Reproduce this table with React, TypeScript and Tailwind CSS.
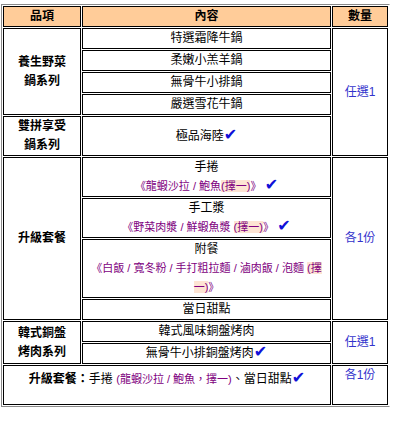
import React from "react";

const cell = "border border-black p-0 text-center align-middle";
const purple = "text-[11px] text-[#800080]";
const pick = "bg-[#fde4d3]";

function Check() {
  return (
    <span className="font-['DejaVu_Sans',sans-serif] text-[16px] leading-none font-bold text-[#1010d8]">
      ✔
    </span>
  );
}

export default function App() {
  return (
    <div className="min-h-screen bg-white pt-1 pl-px font-['Liberation_Sans','Noto_Sans_CJK_TC',sans-serif] text-[12px] leading-[19px] text-black">
      <table className="table-fixed w-[389px] border-separate border-spacing-[1px] border border-[#8a8a8a] border-r-white">
        <tbody>
          {/* Header */}
          <tr>
            <td className={`${cell} w-[78px] bg-[#ffcc99] font-bold`}>品項</td>
            <td className={`${cell} w-[249px] bg-[#ffcc99] font-bold`}>內容</td>
            <td className={`${cell} w-[56px] bg-[#ffcc99] font-bold`}>數量</td>
          </tr>

          {/* 養生野菜鍋系列 */}
          <tr>
            <td rowSpan={4} className={`${cell} font-bold`}>
              養生野菜
              <br />
              鍋系列
            </td>
            <td className={cell}>特選霜降牛鍋</td>
            <td rowSpan={5} className={`${cell} text-[#3333cc]`}>
              任選1
            </td>
          </tr>
          <tr>
            <td className={cell}>柔嫩小羔羊鍋</td>
          </tr>
          <tr>
            <td className={cell}>無骨牛小排鍋</td>
          </tr>
          <tr>
            <td className={cell}>嚴選雪花牛鍋</td>
          </tr>

          {/* 雙拼享受鍋系列 */}
          <tr>
            <td className={`${cell} font-bold`}>
              雙拼享受
              <br />
              鍋系列
            </td>
            <td className={cell}>
              極品海陸
              <Check />
            </td>
          </tr>

          {/* 升級套餐 */}
          <tr>
            <td rowSpan={4} className={`${cell} font-bold`}>
              升級套餐
            </td>
            <td className={cell}>
              手捲
              <br />
              <span className={purple}>
                《龍蝦沙拉 / 鮑魚<span className={pick}>(擇一)</span>》
              </span>{" "}
              <Check />
            </td>
            <td rowSpan={4} className={`${cell} text-[#3333cc]`}>
              各1份
            </td>
          </tr>
          <tr>
            <td className={cell}>
              手工漿
              <br />
              <span className={purple}>
                《野菜肉漿 / 鮮蝦魚漿 <span className={pick}>(擇一)</span>》
              </span>{" "}
              <Check />
            </td>
          </tr>
          <tr>
            <td className={cell}>
              附餐
              <br />
              <span className={purple}>
                《白飯 / 寬冬粉 / 手打粗拉麵 / 滷肉飯 / 泡麵{" "}
                <span className={pick}>(擇一)</span>》
              </span>
            </td>
          </tr>
          <tr>
            <td className={cell}>當日甜點</td>
          </tr>

          {/* 韓式銅盤烤肉系列 */}
          <tr>
            <td rowSpan={2} className={`${cell} font-bold`}>
              韓式銅盤
              <br />
              烤肉系列
            </td>
            <td className={cell}>韓式風味銅盤烤肉</td>
            <td rowSpan={2} className={`${cell} text-[#3333cc]`}>
              任選1
            </td>
          </tr>
          <tr>
            <td className={cell}>
              無骨牛小排銅盤烤肉
              <Check />
            </td>
          </tr>

          {/* Footer row */}
          <tr>
            <td colSpan={2} className="border border-black h-[40px] p-0 pt-[4px] text-center align-top">
              <span className="font-bold">升級套餐：</span>手捲{" "}
              <span className={purple}>(龍蝦沙拉 / 鮑魚，擇一)</span>、當日甜點
              <Check />
            </td>
            <td className="border border-black h-[40px] p-0 text-center align-top text-[#3333cc]">
              各1份
            </td>
          </tr>
        </tbody>
      </table>
    </div>
  );
}
